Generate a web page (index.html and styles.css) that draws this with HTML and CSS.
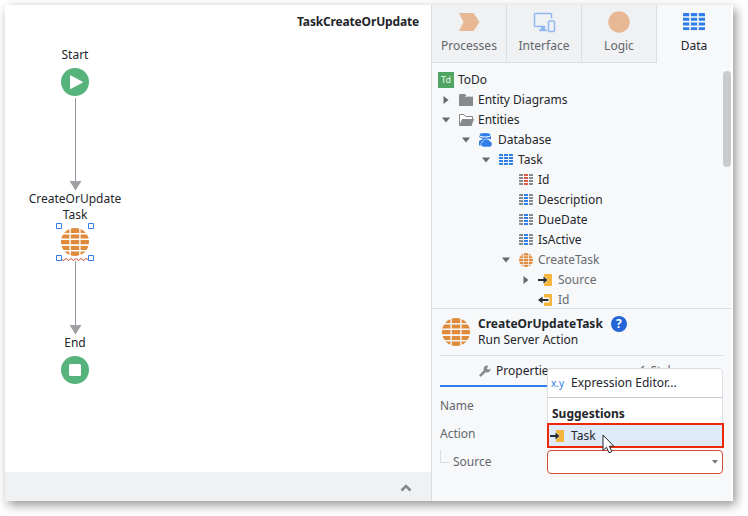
FILE: index.html
```html
<!DOCTYPE html>
<html lang="en">
<head>
<meta charset="utf-8">
<title>TaskCreateOrUpdate</title>
<link rel="stylesheet" href="styles.css">
</head>
<body>
<svg class="defs" width="0" height="0" aria-hidden="true">
  <defs>
    <clipPath id="disc"><circle cx="14" cy="14" r="14"/></clipPath>
    <symbol id="globe" viewBox="0 0 28 28">
      <path clip-path="url(#disc)" d="M0 0h8.400v5H0zM9.800 0h8.400v5H9.800zM19.600 0H28v5h-8.400zM0 6.500h8.400v4H0zM9.800 6.500h8.400v4H9.800zM19.600 6.500H28v4h-8.400zM0 12h8.400v4.300H0zM9.800 12h8.400v4.300H9.800zM19.600 12H28v4.300h-8.400zM0 18h8.400v4H0zM9.800 18h8.400v4H9.800zM19.600 18H28v4h-8.400zM0 23.500h8.400V28H0zM9.800 23.500h8.400V28H9.800zM19.600 23.500H28V28h-8.400z"/>
    </symbol>
    <symbol id="grid" viewBox="0 0 14 11">
      <path d="M.500 0H4v2H0V.500zM0 3h4v2H0zM0 6h4v2H0zM0 9h4v2H.500L0 10.500zM10 0h3.500l.500.500V2h-4zM10 3h4v2h-4zM10 6h4v2h-4zM10 9h4v1.500l-.500.500H10z"/>
      <path class="mid" d="M5 0h4v2H5zM5 3h4v2H5zM5 6h4v2H5zM5 9h4v2H5z"/>
    </symbol>
    <symbol id="down" viewBox="0 0 8 6"><path d="M0 .5h8L4 5.500z"/></symbol>
    <symbol id="right" viewBox="0 0 6 8"><path d="M.5 0v8l5-4z"/></symbol>
    <symbol id="input" viewBox="0 0 14 12">
      <path fill="#f4b63f" d="M6 0h8v12H6V9.500L10 6 6 2.500z"/>
      <path fill="#292d33" d="M0 5h5.500V2.500L9.500 6l-4 3.500V7H0z"/>
    </symbol>
    <symbol id="output" viewBox="0 0 14 12">
      <path fill="#f4b63f" d="M6 0h8v12H6V8.500h5.500v-5H6z"/>
      <path fill="#292d33" d="M10.500 5H4.500V2.500L0 6l4.500 3.500V7h6z"/>
    </symbol>
  </defs>
</svg>

<div class="window">
  <main class="canvas">
    <h1 class="flow-title">TaskCreateOrUpdate</h1>
    <svg class="links" width="426" height="466">
      <path d="M70.500 93v84M70.500 256v65" stroke="#97989d"/>
      <path d="M64.500 176h12l-6 9.500zM64.500 320h12l-6 9.500z" fill="#a0a1a5"/>
    </svg>
    <div class="node start">
      <span>Start</span>
      <svg width="28" height="28"><circle cx="14" cy="14" r="14" fill="#56b37c"/><path d="M9.500 7.800v12.700L21.500 14.200z" fill="#fff" stroke="#fff" stroke-linejoin="round"/></svg>
    </div>
    <div class="node action">
      <span>CreateOrUpdate Task</span>
      <svg width="38" height="38">
        <use href="#globe" x="5" y="5" width="28" height="28" fill="#e08a3c"/>
        <path d="M5 36l2.500 1.500 2.500-2 2.500 2 2.500-2 2.500 2 2.500-2 2.500 2 2.500-2 2.500 2 2.500-2 3 1.500" fill="none" stroke="#d04a38"/>
        <path d="M.500.500h5v5h-5zM32.500.500h5v5h-5zM.500 32.500h5v5h-5zM32.500 32.500h5v5h-5z" fill="#fff" stroke="#2f7de8"/>
      </svg>
    </div>
    <div class="node end">
      <span>End</span>
      <svg width="28" height="28"><circle cx="14" cy="14" r="14" fill="#56b37c"/><rect x="8" y="8" width="12" height="12" rx="1.500" fill="#fff"/></svg>
    </div>
    <footer class="canvas-bar">
      <svg width="12" height="8"><path d="M1.500 6.500L6 2l4.500 4.500" fill="none" stroke="#87888c" stroke-width="2.600"/></svg>
    </footer>
  </main>

  <aside class="panel">
    <nav class="tabs">
      <a class="tab"><svg width="22" height="24"><path d="M1 4h14.500l6 9-6 9H1l4.500-9z" fill="#e7b893"/></svg>Processes</a>
      <a class="tab"><svg width="24" height="24" fill="none" stroke="#8fb8f2" stroke-width="1.500"><path d="M13.500 17.500H3.500q-1 0-1-1V5.500q0-1 1-1h15q1 0 1 1v4"/><path d="M9 18h4v3H9z" fill="#8fb8f2" stroke="none"/><path d="M7 21.300h8" stroke-width="1.800"/><rect x="16.500" y="12" width="6" height="10.500" rx="1"/></svg>Interface</a>
      <a class="tab"><svg width="22" height="24"><circle cx="11" cy="13" r="10.700" fill="#e7b893"/></svg>Logic</a>
      <a class="tab active"><svg width="22" height="24" fill="#2f7de8"><use href="#grid" y="4" width="22" height="17.300"/></svg>Data</a>
    </nav>

    <section class="tree">
      <div class="row root"><b class="logo">Td</b>ToDo</div>
      <div class="row l1"><svg class="arrow"><use href="#right"/></svg><svg class="icon" width="15" height="12" viewBox="0 0 15 12"><path d="M1 0h5l1.500 2H14v10H0V1z" fill="#88898d"/><path d="M6 2.500h8" stroke="#d0d1d4"/></svg>Entity Diagrams</div>
      <div class="row l1"><svg class="arrow"><use href="#down"/></svg><svg class="icon" width="15" height="12" viewBox="0 0 15 12"><path d="M.500 11V.500H5l1.500 2h7V5" fill="#fff" stroke="#88898d"/><path d="M3 5h12l-2.500 7H0z" fill="#88898d"/></svg>Entities</div>
      <div class="row l2"><svg class="arrow"><use href="#down"/></svg><svg class="icon" width="15" height="14" viewBox="0 0 15 14"><path d="M1 3c3 2 9 2 12 0v3.500c-1.500-1-4-1-5 1-2.500 0-4.500 2-4 5H1V8l4-2-4-2z" fill="#2f7de8"/><ellipse cx="7" cy="1.800" rx="5.500" ry="1.700" fill="#2f7de8"/><path d="M5 14a2.700 2.700 0 0 1 0-5.300 3.700 3.700 0 0 1 7-.5A3 3 0 0 1 12 14z" fill="#2f7de8" stroke="#f6f7fa" stroke-width=".6"/></svg>Database</div>
      <div class="row l3"><svg class="arrow"><use href="#down"/></svg><svg class="icon entity" width="14" height="11"><use href="#grid"/></svg>Task</div>
      <div class="row l4"><svg class="icon attr key" width="14" height="11"><use href="#grid"/></svg>Id</div>
      <div class="row l4"><svg class="icon attr" width="14" height="11"><use href="#grid"/></svg>Description</div>
      <div class="row l4"><svg class="icon attr" width="14" height="11"><use href="#grid"/></svg>DueDate</div>
      <div class="row l4"><svg class="icon attr" width="14" height="11"><use href="#grid"/></svg>IsActive</div>
      <div class="row l4 muted"><svg class="arrow"><use href="#down"/></svg><svg class="icon orange" width="14" height="14"><use href="#globe"/></svg>CreateTask</div>
      <div class="row l5 muted"><svg class="arrow"><use href="#right"/></svg><svg class="icon" width="14" height="12"><use href="#input"/></svg>Source</div>
      <div class="row l5 muted"><svg class="icon" width="14" height="12"><use href="#output"/></svg>Id</div>
      <i class="scroll"></i>
    </section>

    <section class="props">
      <header class="head">
        <svg class="orange" width="28" height="28"><use href="#globe"/></svg>
        <div>
          <h2>CreateOrUpdateTask <em class="help">?</em></h2>
          <p>Run Server Action</p>
        </div>
      </header>
      <div class="subtabs">
        <a class="subtab on"><svg width="12" height="12" viewBox="0 0 12 12"><path d="M1.700 10.300L7 5" stroke="#88898d" stroke-width="2.600" stroke-linecap="round"/><path d="M9.500.7A3.500 3.500 0 1 0 11.600 3.800L9.500 4.800 7.700 3.500z" fill="#88898d"/></svg>Properties</a>
        <a class="subtab"><svg width="12" height="12" viewBox="0 0 12 12"><path d="M1 11c0-3 1-4 3-4l1.500 1.500C5.500 10.500 4 11 1 11zM5 6l5-5.500L11.500 1.500 6.500 7.500z" fill="#88898d"/></svg>Styles</a>
      </div>
      <div class="fields">
        <label>Name</label>
        <label>Action</label>
        <label class="child"><i class="elbow"></i>Source</label>
        <div class="combo"><svg width="6" height="4"><path d="M0 0h6L3 3.800z" fill="#77797e"/></svg></div>
      </div>
      <div class="menu">
        <div class="editor"><span class="xy">x.y</span>Expression Editor...</div>
        <div class="group">Suggestions</div>
        <div class="choice"><svg width="14" height="12"><use href="#input"/></svg>Task</div>
        <svg class="cursor" width="14" height="20" viewBox="0 0 14 20"><path d="M1 1v15.500l3.500-3.200 2.500 5.500 2.800-1.200-2.500-5.400h4.500z" fill="#fff" stroke="#23262e"/></svg>
      </div>
    </section>
  </aside>
</div>
</body>
</html>
```

FILE: styles.css
```css
* { box-sizing: border-box; }
body {
  margin: 0;
  padding: 5px;
  height: 516px;
  overflow: hidden;
  background: #fff;
  font: 12px/16px "Noto Sans", sans-serif;
  color: #23262b;
}
h1, h2, p { margin: 0; font-size: 12px; }
svg { display: block; flex: none; }
.defs { position: absolute; }
.window {
  display: flex;
  width: 728px;
  height: 496px;
  background: #fff;
  box-shadow: 3px 4px 10px rgba(0, 0, 0, .42);
}
.canvas {
  position: relative;
  width: 426px;
  display: flex;
  flex-direction: column;
  justify-content: space-between;
}
.flow-title {
  padding: 9px 12px 0;
  text-align: right;
  letter-spacing: -.16px;
}
.links { position: absolute; left: 0; top: 0; }
.node {
  position: absolute;
  left: 20px;
  width: 100px;
  display: flex;
  flex-direction: column;
  align-items: center;
  text-align: center;
}
.start { top: 42px; gap: 5px; }
.action { top: 186px; }
.end { top: 330px; gap: 5px; }
.canvas-bar {
  display: flex;
  justify-content: flex-end;
  height: 29px;
  padding: 12px 19px 0;
  background: #f0f1f3;
}
.panel {
  width: 302px;
  display: flex;
  flex-direction: column;
  border-left: 1px solid #dcdee2;
  border-right: 2px solid #fff;
  background: #f7f8fa;
}
.tabs { display: flex; height: 58px; }
.tab {
  display: flex;
  flex: 0 0 75px;
  flex-direction: column;
  align-items: center;
  gap: 5px;
  padding-top: 4px;
  border-right: 1px solid #dcdee2;
  border-bottom: 1px solid #dcdee2;
  background: #f0f1f3;
  color: #63666c;
}
.tab.active {
  flex-basis: 74px;
  border-color: transparent;
  border-right: 0;
  background: none;
  color: #23262b;
}
.tree {
  position: relative;
  height: 246px;
  padding-top: 7px;
  border-bottom: 1px solid #dcdee2;
  overflow: hidden;
}
.row { display: flex; align-items: center; height: 20px; }
.root { padding-left: 6px; gap: 4px; }
.logo {
  width: 16px;
  height: 16px;
  background: #50a563;
  color: #e5f5e8;
  font-size: 9px;
  font-weight: 400;
  text-align: center;
}
.l1 { padding-left: 27px; }
.l2 { padding-left: 46px; }
.l3 { padding-left: 67px; }
.l4 { padding-left: 87px; }
.l5 { padding-left: 106px; }
.row:not(.root) { position: relative; }
.arrow {
  position: absolute;
  margin-left: -17px;
  width: 8px;
  height: 8px;
  fill: #66686d;
}
.icon { margin-right: 5px; }
.l1 .icon { margin-right: 4px; }
.l2 .arrow, .l5 .arrow { margin-left: -16px; }
.l5 .icon { margin-right: 6px; }
.entity { fill: #2f7de8; }
.attr { fill: #88898d; --mid: #2f7de8; }
.entity, .attr { margin-bottom: 1px; }
.key { --mid: #dc5945; }
.mid { fill: var(--mid); }
.tab, .entity { --mid: #2f7de8; }
.orange { fill: #e08a3c; }
.muted { color: #686b70; }
.scroll {
  position: absolute;
  right: 0;
  top: 8px;
  width: 8px;
  height: 96px;
  border-radius: 4px;
  background: #cacbce;
}
.props { position: relative; flex: 1; padding: 0 8px; }
.head {
  display: flex;
  align-items: center;
  gap: 8px;
  height: 47px;
  padding-left: 2px;
  border-bottom: 1px solid #dcdee2;
}
.head h2 { display: flex; gap: 8px; align-items: center; height: 16px; }
.help {
  width: 16px;
  height: 16px;
  border-radius: 50%;
  background: #2465d8;
  color: #fff;
  text-align: center;
  font-style: normal;
}
.subtabs { display: flex; height: 31px; }
.subtab {
  display: flex;
  flex: 1;
  align-items: center;
  justify-content: center;
  gap: 5px;
  padding-left: 12px;
  border-bottom: 2px solid transparent;
  color: #63666c;
}
.on { border-color: #2f7de8; color: #23262b; }
.fields {
  display: grid;
  grid-template-columns: 107px 176px;
  grid-template-rows: 28px 28px 28px;
  align-items: center;
  padding-top: 5px;
  color: #63666c;
}
.child { display: flex; gap: 3px; }
.elbow {
  width: 10px;
  height: 13px;
  margin-top: -4px;
  border-left: 1px solid #dcdee2;
  border-bottom: 1px solid #dcdee2;
}
.fields label { grid-column: 1; }
.combo {
  grid-column: 2;
  grid-row: 3;
  display: flex;
  align-items: center;
  justify-content: flex-end;
  height: 24px;
  padding-right: 4px;
  border: 1px solid #d54b35;
  border-radius: 4px;
  background: #fff;
}
.menu {
  position: absolute;
  left: 115px;
  top: 59px;
  width: 176px;
  height: 80px;
  border: 1px solid #dcdee2;
  border-radius: 4px 4px 0 0;
  background: #fff;
}
.editor {
  display: flex;
  align-items: center;
  gap: 6px;
  height: 29px;
  padding-left: 3px;
  border-bottom: 1px solid #c8cacd;
}
.xy { width: 14px; color: #2f7de8; font-size: 10px; }
.group { height: 25px; padding: 8px 4px 0; font-weight: 700; }
.choice {
  display: flex;
  align-items: center;
  gap: 7px;
  width: 177px;
  height: 25px;
  margin-left: -1px;
  padding-left: 1px;
  border: 2px solid #ed2809;
  background: #dfeafb;
}
.cursor { position: absolute; left: 54px; top: 65px; }
```
